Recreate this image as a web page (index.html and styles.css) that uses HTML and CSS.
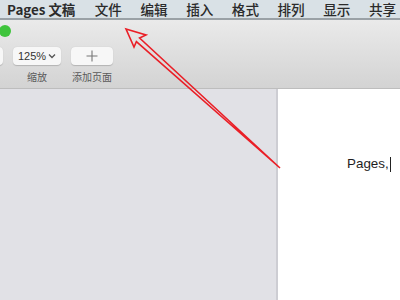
FILE: index.html
```html
<!DOCTYPE html>
<html lang="zh">
<head>
<meta charset="utf-8">
<link rel="stylesheet" href="styles.css">
</head>
<body>
<div class="app">
  <div class="menubar">
    <span class="menu-item app-name">Pages 文稿</span>
    <span class="menu-item">文件</span>
    <span class="menu-item">编辑</span>
    <span class="menu-item">插入</span>
    <span class="menu-item">格式</span>
    <span class="menu-item">排列</span>
    <span class="menu-item">显示</span>
    <span class="menu-item">共享</span>
  </div>
  <div class="toolbar">
    <div class="lights"><span class="light-green"></span></div>
    <div class="tools">
      <div class="tool tool-partial"><div class="btn btn-partial"></div></div>
      <div class="tool">
        <div class="btn btn-zoom">125%<svg class="chev" width="8" height="6" viewBox="0 0 8 6"><path d="M1 1.5 L4 4.5 L7 1.5" fill="none" stroke="#555" stroke-width="1.3"/></svg></div>
        <div class="label">缩放</div>
      </div>
      <div class="tool">
        <div class="btn btn-add"><svg width="12" height="12" viewBox="0 0 12 12"><path d="M6 0.5 V11.5 M0.5 6 H11.5" stroke="#777" stroke-width="1.1"/></svg></div>
        <div class="label">添加页面</div>
      </div>
    </div>
  </div>
  <div class="main">
    <div class="sidebar"></div>
    <div class="page">
      <div class="doc-text">Pages,<span class="caret"></span></div>
    </div>
  </div>
  <svg class="annotation" width="400" height="300" viewBox="0 0 400 300">
    <polygon points="126,29 146,35 139.6,38 280,168 136.4,41.6 134,47" fill="none" stroke="#ea1f27" stroke-width="1.6" stroke-linejoin="miter"/>
  </svg>
</div>
</body>
</html>
```
FILE: styles.css
```css
* { box-sizing: border-box; }
html, body { margin: 0; padding: 0; }
body {
  width: 400px;
  height: 300px;
  overflow: hidden;
  font-family: "Noto Sans CJK SC", "Liberation Sans", sans-serif;
}
.app {
  position: relative;
  width: 400px;
  height: 300px;
  display: flex;
  flex-direction: column;
  background: #e2e2e7;
}
.menubar {
  height: 20px;
  flex: none;
  display: flex;
  align-items: center;
  gap: 18.5px;
  padding-left: 7px;
  background: #d9e1e6;
  border-bottom: 2px solid #9aa1a6;
  font-size: 13.6px;
  color: #2b2b2b;
  white-space: nowrap;
}
.menu-item { line-height: 18px; font-weight: 500; }
.app-name { font-weight: 700; font-size: 13.4px; margin-right: 1px; }
.toolbar {
  height: 69px;
  flex: none;
  background: linear-gradient(#eaeaea, #d3d3d3);
  border-bottom: 1px solid #bdbdbd;
  padding-top: 5px;
}
.lights { height: 12px; }
.light-green {
  display: block;
  width: 12px;
  height: 12px;
  margin-left: -1px;
  border-radius: 50%;
  background: #3fc43c;
}
.tools {
  display: flex;
  gap: 10px;
  margin-top: 10px;
  margin-left: -37px;
}
.tool {
  display: flex;
  flex-direction: column;
  align-items: center;
}
.btn {
  height: 18px;
  background: #f7f7f7;
  border-radius: 4px;
  box-shadow: 0 0.5px 1px rgba(0,0,0,0.18);
  display: flex;
  align-items: center;
  justify-content: center;
}
.btn-partial { width: 40px; }
.btn-zoom {
  width: 48px;
  font-family: "Liberation Sans", sans-serif;
  font-size: 11px;
  color: #333;
  gap: 2px;
}
.btn-add { width: 42px; }
.chev { display: block; }
.label {
  margin-top: 5px;
  font-size: 10px;
  line-height: 13px;
  color: #5a5a5a;
  white-space: nowrap;
}
.main {
  flex: 1;
  display: flex;
}
.sidebar {
  width: 278px;
  flex: none;
  background: #e1e1e6;
  border-right: 2px solid #cdcdd3;
}
.page {
  flex: 1;
  background: #ffffff;
  padding-top: 67px;
  padding-left: 69px;
}
.doc-text {
  font-family: "Liberation Sans", sans-serif;
  font-size: 13.4px;
  line-height: 16px;
  color: #1e1e1e;
  display: flex;
  align-items: center;
}
.caret {
  display: inline-block;
  width: 1px;
  height: 15px;
  background: #222;
  margin-left: 1px;
}
.annotation {
  position: absolute;
  left: 0;
  top: 0;
  pointer-events: none;
}
```
